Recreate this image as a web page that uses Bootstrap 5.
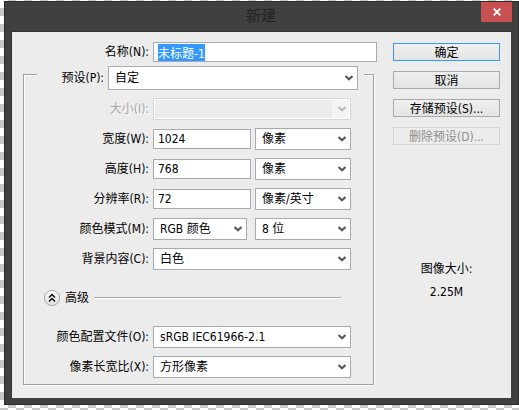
<!DOCTYPE html>
<html lang="zh-CN">
<head>
<meta charset="utf-8">
<meta name="viewport" content="width=device-width, initial-scale=1">
<title>新建</title>
<link href="https://cdn.jsdelivr.net/npm/bootstrap@5.3.0/dist/css/bootstrap.min.css" rel="stylesheet">
<style>
:root { --face: #ececec; --line: #a9a9b0; }
body {
  font: 12px/16px "DejaVu Sans Condensed", "Noto Sans", "Noto Sans CJK SC", sans-serif;
  color: #000;
  padding: 1px 0 4px 4px;
  background: #fff repeating-conic-gradient(#c8c8c8 0 25%, #fff 0 50%) 0 0 / 16px 16px;
}
.dialog { background: #404040; border: 1px solid #2b2b2b; padding: 0 7px 6px 6px; }
.titlebar { height: 29px; }
.titlebar h1 { font-size: 15px; line-height: 29px; color: #222; padding-left: 30px; }
.close-btn { width: 31px; height: 20px; background: #c75050; border: 0; margin-right: -1px; }
.dialog-body { background: var(--face); border: 1px solid #333; border-width: 1px 0 0 1px; padding: 10px 11px 13px; gap: 16px; }
.caption { width: 125px; flex: none; text-align: right; white-space: nowrap; }
.name-row .caption { width: 126px; }
.field-row { gap: 4px; min-height: 22px; }
.name-row { min-height: 20px; }
.field-row .form-control, .field-row .form-select {
  font-size: 12px; line-height: 16px; color: #000; border: 1px solid var(--line);
  border-radius: 0; background-color: #fff; box-shadow: none; min-width: 0;
}
.field-row .form-control { height: 20px; min-height: 0; padding: 1px 4px; }
.field-row .form-select {
  height: 22px; padding: 2px 18px 2px 6px;
  background-image: url("data:image/svg+xml,%3Csvg xmlns='http://www.w3.org/2000/svg' width='8' height='6'%3E%3Cpath d='M.5 1 4 4.3 7.5 1' fill='none' stroke='%23585858' stroke-width='2.2'/%3E%3C/svg%3E");
  background-size: 8px 6px; background-position: right 4px center;
}
#docName::selection { background: #3399ff; color: #fff; }
.group { border: 1px solid #a0a0a0; box-shadow: 1px 1px #fff, inset 1px 1px #fff; margin: 12px 3px 0 0; padding: 0 22px 6px 0; }
.preset-row { margin: -9px -13px 8px 13px; padding-right: 6px; background: var(--face); }
.preset-row .caption { width: 67px; }
.field-row .preset-select { height: 24px; }
.stack { display: grid; gap: 8px; }
.pair { display: grid; grid-template-columns: minmax(0, 1fr) 96px; gap: 4px; align-items: center; }
.pair-wide { column-gap: 8px; }
.off .caption { color: #a5a5a5; text-shadow: 1px 1px #fff; }
.off .form-select:disabled {
  border-color: #d8d8d8; color: #a5a5a5; background-color: var(--face); box-shadow: inset 0 0 0 1px #fff;
  background-image: url("data:image/svg+xml,%3Csvg xmlns='http://www.w3.org/2000/svg' width='8' height='6'%3E%3Cpath d='M.5 1 4 4.3 7.5 1' fill='none' stroke='%23bbbbbb' stroke-width='2.2'/%3E%3C/svg%3E"), linear-gradient(#f4f4f4, #f4f4f4);
  background-size: 8px 6px, 18px 100%; background-position: right 4px center, right top; background-repeat: no-repeat;
}
.advanced { margin: 20px -12px 20px 20px; padding-right: 22px; gap: 5px; height: 16px; }
.toggle { border: 0; background: none; width: 16px; height: 16px; }
.rule { height: 2px; border-top: 1px solid #aaa; background: #fff; }
.side { width: 107px; flex: none; padding-top: 1px; }
.actions { gap: 10px; }
.side .btn {
  height: 18px; padding: 1px 0 0; font-size: 12px; line-height: 16px; color: #000; border: 1px solid var(--line);
  border-radius: 0; background: linear-gradient(#f0f0f0, #e3e3e3);
}
.side .btn-ok { border-color: #3399ff; }
.side .btn:disabled { color: #8c8c8c; border-color: #d5d5d5; background: var(--face); opacity: 1; }
.size-info { margin-top: 113px; line-height: 23px; }
</style>
<script src="https://cdn.jsdelivr.net/npm/bootstrap@5.3.0/dist/js/bootstrap.bundle.min.js" defer></script>
</head>
<body>
<main class="dialog">
  <header class="titlebar d-flex align-items-start">
    <h1 class="flex-grow-1 text-center m-0 fw-normal">新建</h1>
    <button type="button" class="close-btn d-flex align-items-center justify-content-center p-0" aria-label="关闭">
      <svg width="8" height="8" viewBox="0 0 8 8"><path d="M.7.7l6.6 6.6M7.3.7L.7 7.3" stroke="#fff" stroke-width="1.8"/></svg>
    </button>
  </header>
  <form class="dialog-body d-flex">
    <div class="flex-grow-1">
      <div class="field-row name-row d-flex align-items-center">
        <label class="caption" for="docName">名称(N):</label>
        <input class="form-control" id="docName" type="text" value="未标题-1">
      </div>
      <div class="group">
        <div class="field-row preset-row d-flex align-items-center">
          <label class="caption" for="preset">预设(P):</label>
          <select class="form-select preset-select" id="preset"><option>自定</option></select>
        </div>
        <div class="stack">
          <div class="field-row off d-flex align-items-center">
            <label class="caption" for="size">大小(I):</label>
            <select class="form-select" id="size" disabled><option></option></select>
          </div>
          <div class="field-row d-flex align-items-center">
            <label class="caption" for="w">宽度(W):</label>
            <div class="pair flex-grow-1">
              <input class="form-control" id="w" type="text" value="1024">
              <select class="form-select" aria-label="宽度单位"><option>像素</option></select>
            </div>
          </div>
          <div class="field-row d-flex align-items-center">
            <label class="caption" for="h">高度(H):</label>
            <div class="pair flex-grow-1">
              <input class="form-control" id="h" type="text" value="768">
              <select class="form-select" aria-label="高度单位"><option>像素</option></select>
            </div>
          </div>
          <div class="field-row d-flex align-items-center">
            <label class="caption" for="res">分辨率(R):</label>
            <div class="pair flex-grow-1">
              <input class="form-control" id="res" type="text" value="72">
              <select class="form-select" aria-label="分辨率单位"><option>像素/英寸</option></select>
            </div>
          </div>
          <div class="field-row d-flex align-items-center">
            <label class="caption" for="mode">颜色模式(M):</label>
            <div class="pair pair-wide flex-grow-1">
              <select class="form-select" id="mode"><option>RGB 颜色</option></select>
              <select class="form-select" aria-label="位深度"><option>8 位</option></select>
            </div>
          </div>
          <div class="field-row d-flex align-items-center">
            <label class="caption" for="bg">背景内容(C):</label>
            <select class="form-select" id="bg"><option>白色</option></select>
          </div>
        </div>
        <div class="advanced d-flex align-items-center">
          <button type="button" class="toggle p-0 d-flex align-items-center justify-content-center flex-shrink-0" aria-labelledby="adv">
            <svg width="18" height="18" viewBox="0 0 18 18" class="flex-shrink-0">
              <defs><linearGradient id="knob" x2="0" y2="1"><stop stop-color="#fff"/><stop offset="1" stop-color="#dcdcdc"/></linearGradient></defs>
              <circle cx="9" cy="9" r="7.6" fill="url(#knob)" stroke="#aaa"/>
              <path d="M6 8.5l3-3 3 3M6 12.5l3-3 3 3" fill="none" stroke="#111" stroke-width="1.5"/>
            </svg>
          </button>
          <span id="adv">高级</span>
          <div class="rule flex-grow-1"></div>
        </div>
        <div class="stack">
          <div class="field-row d-flex align-items-center">
            <label class="caption" for="profile">颜色配置文件(O):</label>
            <select class="form-select" id="profile"><option>sRGB IEC61966-2.1</option></select>
          </div>
          <div class="field-row d-flex align-items-center">
            <label class="caption" for="aspect">像素长宽比(X):</label>
            <select class="form-select" id="aspect"><option>方形像素</option></select>
          </div>
        </div>
      </div>
    </div>
    <div class="side">
      <div class="actions d-grid">
        <button type="submit" class="btn btn-ok">确定</button>
        <button type="button" class="btn">取消</button>
        <button type="button" class="btn">存储预设(S)...</button>
        <button type="button" class="btn" disabled>删除预设(D)...</button>
      </div>
      <div class="size-info text-center">图像大小:<br>2.25M</div>
    </div>
  </form>
</main>
<script>
document.getElementById('docName').focus();
document.getElementById('docName').select();
</script>
</body>
</html>
